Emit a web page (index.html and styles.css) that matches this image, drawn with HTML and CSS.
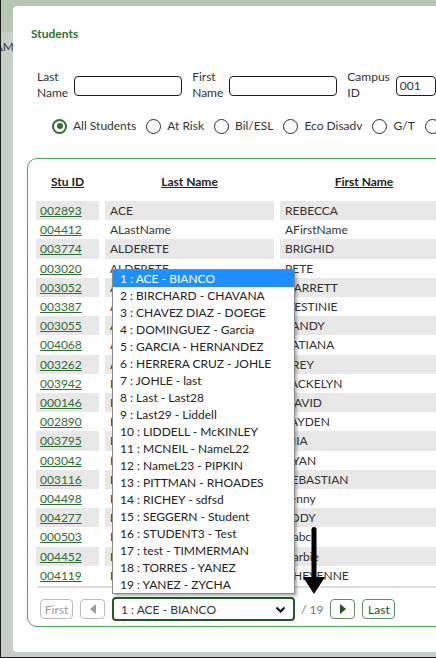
FILE: index.html
```html
<!DOCTYPE html>
<html>
<head>
<meta charset="utf-8">
<link rel="stylesheet" href="styles.css">
</head>
<body>
<div class="screen">
  <div class="side"><span class="side-text">EAM</span></div>
  <div class="dialog">
    <h2 class="title">Students</h2>
    <div class="search">
      <label class="lbl">Last<br>Name</label>
      <input class="inp inp-name" type="text">
      <label class="lbl lbl-gap">First<br>Name</label>
      <input class="inp inp-name" type="text">
      <label class="lbl lbl-gap">Campus<br>ID</label>
      <input class="inp inp-campus" type="text" value="001">
    </div>
    <div class="radios">
      <div class="radio"><span class="dot checked"></span><span>All Students</span></div>
      <div class="radio"><span class="dot"></span><span>At Risk</span></div>
      <div class="radio"><span class="dot"></span><span>Bil/ESL</span></div>
      <div class="radio"><span class="dot"></span><span>Eco Disadv</span></div>
      <div class="radio"><span class="dot"></span><span>G/T</span></div>
      <div class="radio"><span class="dot"></span><span>Migrant</span></div>
    </div>
    <div class="card">
      <table class="grid">
        <colgroup><col class="c1"><col class="c2"><col class="c3"></colgroup>
        <thead>
          <tr><th>Stu ID</th><th>Last Name</th><th>First Name</th></tr>
        </thead>
        <tbody>
          <tr><td><a>002893</a></td><td>ACE</td><td>REBECCA</td></tr>
          <tr><td><a>004412</a></td><td>ALastName</td><td>AFirstName</td></tr>
          <tr><td><a>003774</a></td><td>ALDERETE</td><td>BRIGHID</td></tr>
          <tr><td><a>003020</a></td><td>ALDERETE</td><td>PETE</td></tr>
          <tr><td><a>003052</a></td><td>ALLEN</td><td>GARRETT</td></tr>
          <tr><td><a>003387</a></td><td>ALVAREZ</td><td>DESTINIE</td></tr>
          <tr><td><a>003055</a></td><td>ANDERSON</td><td>SANDY</td></tr>
          <tr><td><a>004068</a></td><td>ARMSTRONG</td><td>TATIANA</td></tr>
          <tr><td><a>003262</a></td><td>AVILA</td><td>TREY</td></tr>
          <tr><td><a>003942</a></td><td>BAILEY</td><td>JACKELYN</td></tr>
          <tr><td><a>000146</a></td><td>BAKER</td><td>DAVID</td></tr>
          <tr><td><a>002890</a></td><td>BARNES</td><td>JAYDEN</td></tr>
          <tr><td><a>003795</a></td><td>BELL</td><td>MIA</td></tr>
          <tr><td><a>003042</a></td><td>BENNETT</td><td>RYAN</td></tr>
          <tr><td><a>003116</a></td><td>BISHOP</td><td>SEBASTIAN</td></tr>
          <tr><td><a>004498</a></td><td>BLACK</td><td>Jenny</td></tr>
          <tr><td><a>004277</a></td><td>BROOKS</td><td>JODY</td></tr>
          <tr><td><a>000503</a></td><td>BROWN</td><td>Babc</td></tr>
          <tr><td><a>004452</a></td><td>BURNS</td><td>Barbie</td></tr>
          <tr><td><a>004119</a></td><td>BYRD</td><td>CHEYENNE</td></tr>
        </tbody>
      </table>
      <div class="rule"></div>
      <div class="pager">
        <button class="pbtn pbtn-off btn-word">First</button>
        <button class="pbtn pbtn-off btn-icon"><svg width="8" height="10" viewBox="0 0 8 10"><polygon points="7,0 7,10 1,5" fill="#9a9a9a"/></svg></button>
        <div class="selectbox"><span>1 : ACE - BIANCO</span><svg width="11" height="7" viewBox="0 0 11 7"><polyline points="1.5,1.5 5.5,5.5 9.5,1.5" fill="none" stroke="#111" stroke-width="2.2"/></svg></div>
        <span class="of">/ 19</span>
        <button class="pbtn pbtn-on btn-icon"><svg width="8" height="10" viewBox="0 0 8 10"><polygon points="1,0 1,10 7,5" fill="#1f4f22"/></svg></button>
        <button class="pbtn pbtn-on btn-word">Last</button>
      </div>
    </div>

    <div class="popup">
      <div class="opt sel">1 : ACE - BIANCO</div>
      <div class="opt">2 : BIRCHARD - CHAVANA</div>
      <div class="opt">3 : CHAVEZ DIAZ - DOEGE</div>
      <div class="opt">4 : DOMINGUEZ - Garcia</div>
      <div class="opt">5 : GARCIA - HERNANDEZ</div>
      <div class="opt">6 : HERRERA CRUZ - JOHLE</div>
      <div class="opt">7 : JOHLE - last</div>
      <div class="opt">8 : Last - Last28</div>
      <div class="opt">9 : Last29 - Liddell</div>
      <div class="opt">10 : LIDDELL - McKINLEY</div>
      <div class="opt">11 : MCNEIL - NameL22</div>
      <div class="opt">12 : NameL23 - PIPKIN</div>
      <div class="opt">13 : PITTMAN - RHOADES</div>
      <div class="opt">14 : RICHEY - sdfsd</div>
      <div class="opt">15 : SEGGERN - Student</div>
      <div class="opt">16 : STUDENT3 - Test</div>
      <div class="opt">17 : test - TIMMERMAN</div>
      <div class="opt">18 : TORRES - YANEZ</div>
      <div class="opt">19 : YANEZ - ZYCHA</div>
    </div>

    <svg class="arrow" width="22" height="67" viewBox="0 0 22 67">
      <rect x="8.5" y="0" width="5" height="56" rx="2.5" fill="#000"/>
      <polygon points="0,50 22,50 11,67" fill="#000"/>
    </svg>
  </div>
</div>
</body>
</html>
```

FILE: styles.css
```css
* { box-sizing: border-box; }

html, body {
  margin: 0;
  padding: 0;
}

body {
  font-family: Lato, "Open Sans", sans-serif;
  font-size: 12px;
  color: #333;
  background: #c6cdc6;
}

.screen {
  width: 436px;
  height: 658px;
  display: flex;
  align-items: flex-start;
  overflow: hidden;
  border-left: 1px solid #1a1a1a;
  border-bottom: 1px solid #1a1a1a;
  background: linear-gradient(to bottom, #b7c5b1 0, #b7c5b1 32px, #c7cec7 32px);
}

.side {
  width: 12px;
  flex: 0 0 12px;
  height: 100%;
  overflow: hidden;
  display: flex;
  justify-content: flex-end;
  padding-top: 40px;
}

.side-text {
  white-space: nowrap;
  font-size: 12px;
  line-height: 14px;
  color: #3a3a3a;
  margin-right: -1px;
}

.dialog {
  position: relative;
  flex: 0 0 480px;
  width: 480px;
  height: 646px;
  margin-top: 6px;
  background: #fff;
  border-radius: 4px;
  overflow: hidden;
  padding-top: 20px;
}

.title {
  margin: 0 0 0 18px;
  font-size: 12px;
  line-height: 16px;
  font-weight: 700;
  color: #2e6e32;
}

.search {
  display: flex;
  align-items: center;
  margin: 27px 0 0 24px;
}

.lbl {
  font-size: 12px;
  line-height: 16px;
  color: #333;
  margin-right: 6px;
}

.lbl-gap {
  margin-left: 10px;
}

.inp {
  height: 20px;
  border: 1px solid #1e1e1e;
  border-radius: 4px;
  font-family: Lato, sans-serif;
  font-size: 12px;
  color: #333;
  padding: 0 3px;
  margin: 1px 0 0 0;
  outline: none;
  background: #fff;
}

.inp-name { width: 108px; }
.inp-campus { width: 40px; }

.radios {
  display: flex;
  align-items: center;
  gap: 10px;
  margin: 17px 0 0 39px;
  white-space: nowrap;
}

.radio {
  display: flex;
  align-items: center;
  gap: 6px;
  font-size: 12px;
  line-height: 16px;
  color: #333;
}

.dot {
  width: 15px;
  height: 15px;
  border-radius: 50%;
  border: 1.5px solid #2a2a2a;
  flex: 0 0 15px;
  position: relative;
}

.dot.checked {
  border: 2px solid #2e6e32;
}

.dot.checked::after {
  content: "";
  position: absolute;
  left: 2.5px;
  top: 2.5px;
  width: 6px;
  height: 6px;
  border-radius: 50%;
  background: #2e6e32;
}

.card {
  margin: 24px 0 0 14px;
  width: 460px;
  height: 469px;
  border: 1px solid #47a84c;
  border-radius: 10px;
  padding: 15px 0 0 2px;
}

.grid {
  table-layout: fixed;
  width: 424px;
  border-collapse: separate;
  border-spacing: 6px 0;
  font-size: 12px;
}

.c1 { width: 63px; }
.c2 { width: 169px; }
.c3 { width: 168px; }

.grid th {
  font-weight: 700;
  text-decoration: underline;
  color: #222;
  line-height: 16px;
  padding: 0 0 11px 0;
  text-align: center;
}

.grid td {
  line-height: 19.2px;
  height: 19.2px;
  padding: 0 0 0 5px;
  white-space: nowrap;
  overflow: hidden;
  color: #333;
}

.grid td:first-child {
  padding-left: 4px;
}

.grid tbody tr:nth-child(odd) td {
  background: #e8e8e8;
}

.grid a {
  color: #2e6e32;
  text-decoration: underline;
}

.rule {
  margin: 1px 0 0 7px;
  height: 2px;
  background: #dedede;
}

.pager {
  display: flex;
  align-items: center;
  gap: 7px;
  margin: 9px 0 0 10px;
}

.pbtn {
  height: 20px;
  border-radius: 4px;
  background: #fff;
  font-family: Lato, sans-serif;
  font-size: 12px;
  padding: 0;
  display: flex;
  align-items: center;
  justify-content: center;
}

.btn-word { width: 33px; }
.btn-icon { width: 25px; }

.pbtn-off {
  border: 1px solid #bdbdbd;
  color: #9a9a9a;
}

.pbtn-on {
  border: 1px solid #5f8f62;
  color: #1f4f22;
}

.selectbox {
  width: 183px;
  height: 24px;
  border: 2px solid #215a24;
  border-radius: 4px;
  display: flex;
  align-items: center;
  justify-content: space-between;
  padding: 0 7px 0 7px;
  font-size: 12px;
  color: #333;
}

.of {
  font-size: 12px;
  color: #777;
  margin-left: -1px;
}

.popup {
  position: absolute;
  left: 99px;
  top: 263px;
  width: 183px;
  background: #fff;
  border: 1px solid #8a8a8a;
  box-shadow: 2px 2px 3px rgba(0, 0, 0, 0.3);
}

.opt {
  height: 17px;
  line-height: 17px;
  padding-left: 7px;
  font-size: 12px;
  color: #222;
  white-space: nowrap;
}

.opt.sel {
  background: #1e8fff;
  color: #fff;
}

.arrow {
  position: absolute;
  left: 290px;
  top: 521px;
}
```
